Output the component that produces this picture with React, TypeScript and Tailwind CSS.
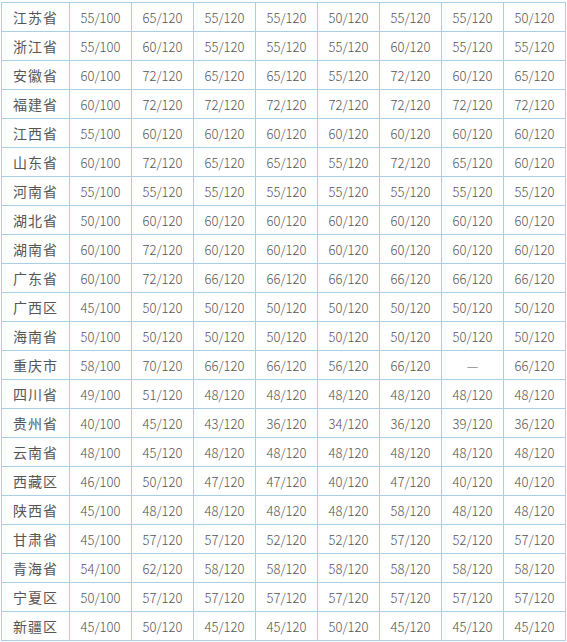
import React from 'react';

// 各省分数线表（总分/满分）
const rows: [string, string[]][] = [
  ['江苏省', ['55/100', '65/120', '55/120', '55/120', '50/120', '55/120', '55/120', '50/120']],
  ['浙江省', ['55/100', '60/120', '55/120', '55/120', '55/120', '60/120', '55/120', '55/120']],
  ['安徽省', ['60/100', '72/120', '65/120', '65/120', '55/120', '72/120', '60/120', '65/120']],
  ['福建省', ['60/100', '72/120', '72/120', '72/120', '72/120', '72/120', '72/120', '72/120']],
  ['江西省', ['55/100', '60/120', '60/120', '60/120', '60/120', '60/120', '60/120', '60/120']],
  ['山东省', ['60/100', '72/120', '65/120', '65/120', '55/120', '72/120', '65/120', '60/120']],
  ['河南省', ['55/100', '55/120', '55/120', '55/120', '55/120', '55/120', '55/120', '55/120']],
  ['湖北省', ['50/100', '60/120', '60/120', '60/120', '60/120', '60/120', '60/120', '60/120']],
  ['湖南省', ['60/100', '72/120', '60/120', '60/120', '60/120', '60/120', '60/120', '60/120']],
  ['广东省', ['60/100', '72/120', '66/120', '66/120', '66/120', '66/120', '66/120', '66/120']],
  ['广西区', ['45/100', '50/120', '50/120', '50/120', '50/120', '50/120', '50/120', '50/120']],
  ['海南省', ['50/100', '50/120', '50/120', '50/120', '50/120', '50/120', '50/120', '50/120']],
  ['重庆市', ['58/100', '70/120', '66/120', '66/120', '56/120', '66/120', '—', '66/120']],
  ['四川省', ['49/100', '51/120', '48/120', '48/120', '48/120', '48/120', '48/120', '48/120']],
  ['贵州省', ['40/100', '45/120', '43/120', '36/120', '34/120', '36/120', '39/120', '36/120']],
  ['云南省', ['48/100', '45/120', '48/120', '48/120', '48/120', '48/120', '48/120', '48/120']],
  ['西藏区', ['46/100', '50/120', '47/120', '47/120', '40/120', '47/120', '40/120', '40/120']],
  ['陕西省', ['45/100', '48/120', '48/120', '48/120', '48/120', '58/120', '48/120', '48/120']],
  ['甘肃省', ['45/100', '57/120', '57/120', '52/120', '52/120', '57/120', '52/120', '57/120']],
  ['青海省', ['54/100', '62/120', '58/120', '58/120', '58/120', '58/120', '58/120', '58/120']],
  ['宁夏区', ['50/100', '57/120', '57/120', '57/120', '57/120', '57/120', '57/120', '57/120']],
  ['新疆区', ['45/100', '50/120', '45/120', '45/120', '50/120', '45/120', '45/120', '45/120']],
];

export default function App() {
  return (
    <div className="min-h-screen bg-white pt-[2px] pl-[1px] font-['Noto_Sans_CJK_SC',sans-serif] text-[#555]">
      <div className="grid w-fit grid-cols-[67px_repeat(8,61px)] auto-rows-[28px] gap-px bg-[#a9cfe6] p-px">
        {rows.map(([province, scores]) => (
          <React.Fragment key={province}>
            <div className="flex items-center justify-center bg-white text-[14px] leading-none tracking-[1px]">
              {province}
            </div>
            {scores.map((s, i) => (
              <div key={i} className="flex items-center justify-center bg-white text-[13px] font-light leading-none">
                {s}
              </div>
            ))}
          </React.Fragment>
        ))}
      </div>
    </div>
  );
}
